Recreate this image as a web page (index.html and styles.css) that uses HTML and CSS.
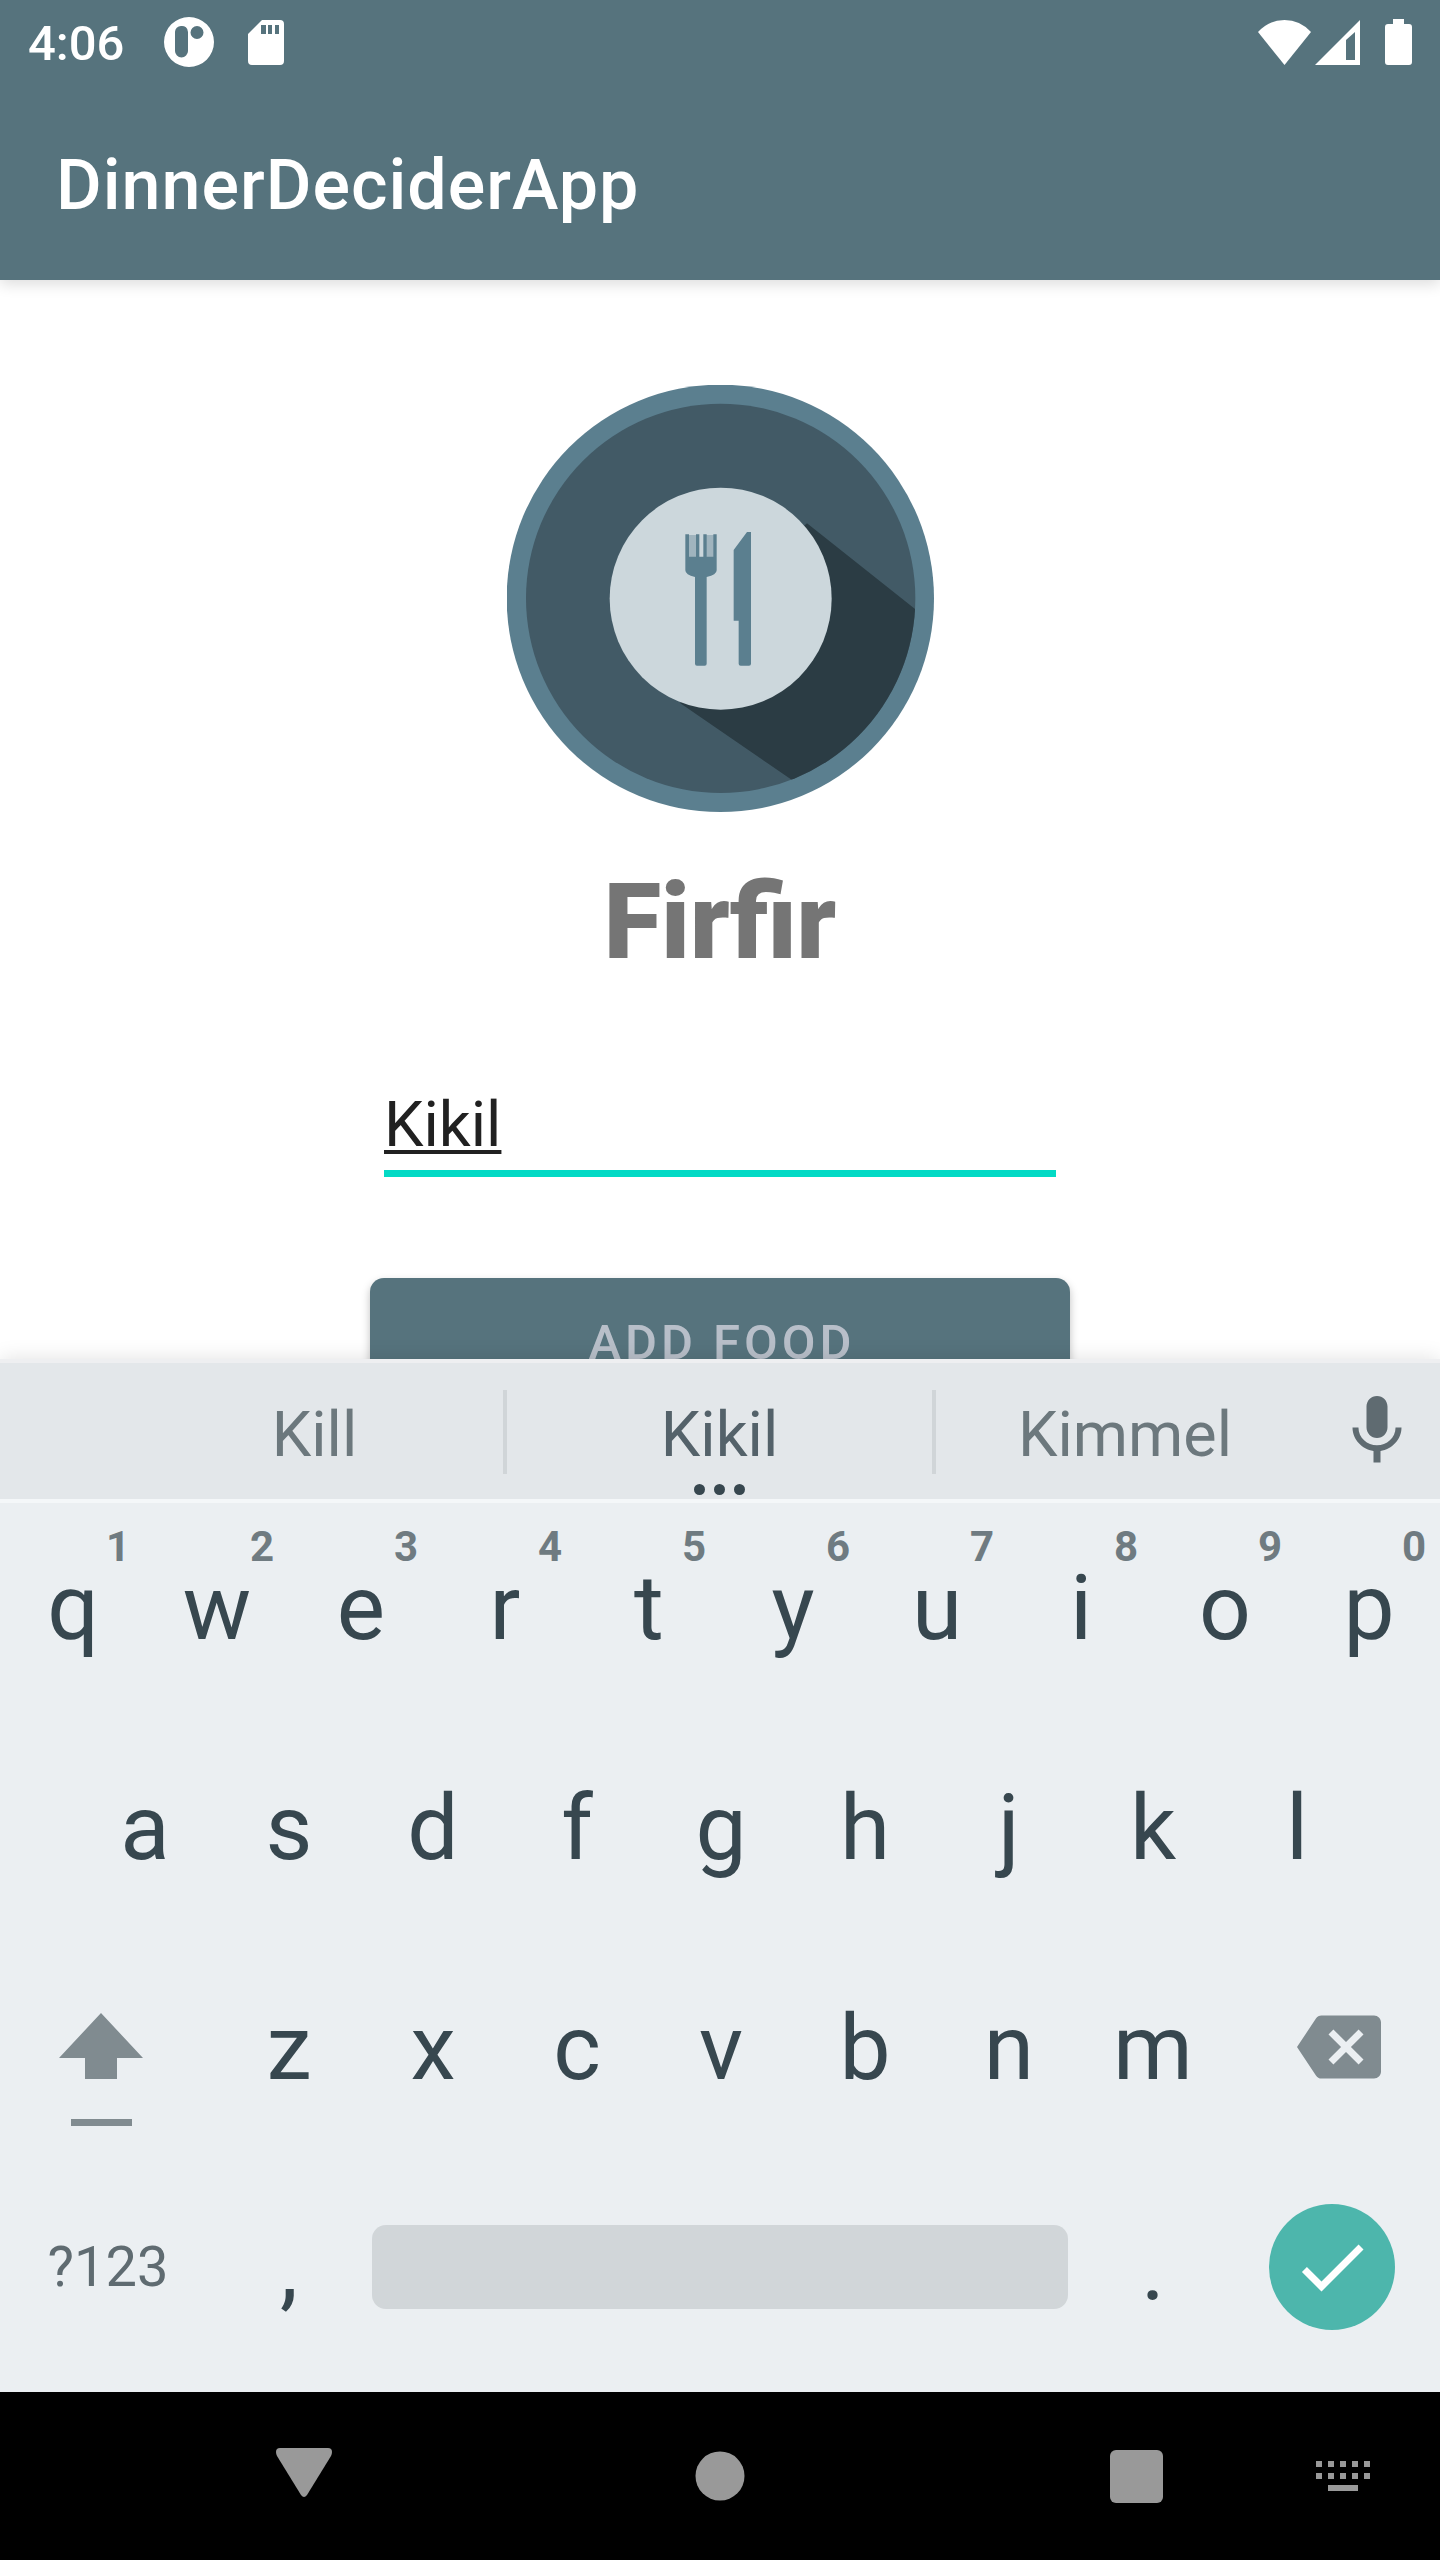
FILE: index.html
```html
<!DOCTYPE html>
<html lang="en">
<head>
<meta charset="utf-8">
<meta name="viewport" content="width=device-width, initial-scale=1">
<title>DinnerDeciderApp</title>
<link rel="stylesheet" href="styles.css">
</head>
<body>
<div class="screen">
  <header class="header">
    <div class="status">
      <time class="clock">4:06</time>
      <div class="status-left">
        <svg width="50" height="50" viewBox="0 0 50 50" aria-hidden="true"><path fill="#fff" fill-rule="evenodd" d="M25 0a25 25 0 1 1 0 50a25 25 0 1 1 0-50zM17 9a6 6 0 0 0-6 6v19a6 6 0 0 0 13 0V15a6 6 0 0 0-7-6zM33 9a6.500 6.500 0 1 0 0 13a6.500 6.500 0 1 0 0-13z"/></svg>
        <svg width="36" height="45" viewBox="0 0 36 45" aria-hidden="true"><path fill="#fff" fill-rule="evenodd" d="M14 0h18a4 4 0 0 1 4 4v37a4 4 0 0 1-4 4H4a4 4 0 0 1-4-4V14zM13 5v9h5V5zM20 5v9h4V5zM27 5v9h4V5z"/></svg>
      </div>
      <div class="status-right">
        <svg width="53" height="45" viewBox="0 0 53 45" aria-hidden="true"><path fill="#fff" d="M26.500 45L0 12Q11 0 26.500 0T53 12z"/></svg>
        <svg width="45" height="45" viewBox="0 0 45 45" aria-hidden="true"><path fill="#fff" fill-rule="evenodd" d="M45 0v45H0zM40 12l-9 8v20h9z"/></svg>
        <svg class="battery" width="27" height="46" viewBox="0 0 27 46" aria-hidden="true"><path fill="#fff" d="M8 0h11v5h5a3 3 0 0 1 3 3v35a3 3 0 0 1-3 3H3a3 3 0 0 1-3-3V8a3 3 0 0 1 3-3h5z"/></svg>
      </div>
    </div>
    <h1 class="title">DinnerDeciderApp</h1>
  </header>

  <main class="content">
    <svg class="logo" viewBox="50 45 1281 1281" role="img" aria-label="Plate with fork and knife">
      <defs><clipPath id="plate"><circle cx="691" cy="685" r="584"/></clipPath></defs>
      <circle cx="690" cy="685" r="641" fill="#5b7f8f"/>
      <circle cx="691" cy="685" r="584" fill="#425a66"/>
      <path clip-path="url(#plate)" fill="#2b3c44" d="M950 460L1275 718L1400 1300L1010 1305L905 1230L570 1000L690 685z"/>
      <circle cx="691" cy="686" r="333" fill="#ccd7dc"/>
      <path fill="#a0b4be" d="M590 495h30v70h-30zM643 495h30v70h-30z"/>
      <path fill="#5b7f8f" d="M585 493h11v67h21v-67h10v67h12v-67h10v67h20v-67h10v108q0 14-30 20v260q0 6-6 6h-23q-6 0-6-6V621q-29-6-29-20zM770 486h12v395q0 6-6 6h-25q-6 0-6-6V752h-15V540z"/>
    </svg>
    <h2 class="food">Firfir</h2>
    <form class="form">
      <input class="field" type="text" value="Kikil" aria-label="Food name">
      <button class="add" type="button">ADD FOOD</button>
    </form>
  </main>

  <section class="keyboard" aria-label="Keyboard">
    <div class="suggestions">
      <button class="word" type="button">Kill</button>
      <button class="word current" type="button">Kikil<span class="dots"><i></i><i></i><i></i></span></button>
      <button class="word" type="button">Kimmel</button>
      <button class="mic" type="button" aria-label="Voice input"><svg width="84" height="84" viewBox="0 0 24 24"><path fill="#5f6b71" d="M12 14c1.660 0 3-1.340 3-3V5c0-1.660-1.340-3-3-3S9 3.340 9 5v6c0 1.660 1.340 3 3 3zM17.300 11c0 3-2.540 5.100-5.300 5.100S6.700 14 6.700 11H5c0 3.410 2.720 6.230 6 6.720V21h2v-3.280c3.280-.48 6-3.300 6-6.720z"/></svg></button>
    </div>
    <div class="keys">
      <div class="row">
        <button class="key" type="button">q<span class="hint">1</span></button>
        <button class="key" type="button">w<span class="hint">2</span></button>
        <button class="key" type="button">e<span class="hint">3</span></button>
        <button class="key" type="button">r<span class="hint">4</span></button>
        <button class="key" type="button">t<span class="hint">5</span></button>
        <button class="key" type="button">y<span class="hint">6</span></button>
        <button class="key" type="button">u<span class="hint">7</span></button>
        <button class="key" type="button">i<span class="hint">8</span></button>
        <button class="key" type="button">o<span class="hint">9</span></button>
        <button class="key" type="button">p<span class="hint">0</span></button>
      </div>
      <div class="row inset">
        <button class="key" type="button">a</button>
        <button class="key" type="button">s</button>
        <button class="key" type="button">d</button>
        <button class="key" type="button">f</button>
        <button class="key" type="button">g</button>
        <button class="key" type="button">h</button>
        <button class="key" type="button">j</button>
        <button class="key" type="button">k</button>
        <button class="key" type="button">l</button>
      </div>
      <div class="row">
        <button class="key side shift" type="button" aria-label="Shift"><svg width="84" height="160" viewBox="0 0 84 160"><path fill="#808b90" d="M42 46l42 45H58v21H26V91H0zM12 152h61v7H12z"/></svg></button>
        <button class="key" type="button">z</button>
        <button class="key" type="button">x</button>
        <button class="key" type="button">c</button>
        <button class="key" type="button">v</button>
        <button class="key" type="button">b</button>
        <button class="key" type="button">n</button>
        <button class="key" type="button">m</button>
        <button class="key side delete" type="button" aria-label="Delete"><svg width="84" height="84" viewBox="0 0 24 24"><path fill="#808b90" d="M22 3H7c-.69 0-1.230.35-1.590.88L0 12l5.410 8.110c.36.53.9.89 1.590.89h15c1.100 0 2-.9 2-2V5c0-1.100-.9-2-2-2zm-3 12.590L17.590 17 14 13.410 10.410 17 9 15.590 12.590 12 9 8.410 10.410 7 14 10.590 17.590 7 19 8.410 15.410 12 19 15.590z"/></svg></button>
      </div>
      <div class="row">
        <button class="key side symbols" type="button">?123</button>
        <button class="key" type="button">,</button>
        <button class="key space" type="button" aria-label="Space"><span class="bar"></span></button>
        <button class="key" type="button">.</button>
        <button class="key side" type="button" aria-label="Done"><span class="done"><svg width="84" height="84" viewBox="0 0 24 24"><path fill="#fff" d="M9 16.170L4.830 12l-1.420 1.410L9 19 21 7l-1.410-1.410z"/></svg></span></button>
      </div>
    </div>
  </section>

  <nav class="nav" aria-label="System">
    <button class="nav-key back" type="button" aria-label="Back"><svg width="56" height="56" viewBox="0 0 56 56"><path fill="#999" d="M4 0h48q4 0 4 4 0 2-1 4L31 47q-3 4-6 0L1 8Q0 6 0 4 0 0 4 0z"/></svg></button>
    <button class="nav-key home" type="button" aria-label="Home"><svg width="50" height="50" viewBox="0 0 50 50"><circle cx="25" cy="25" r="24.500" fill="#999"/></svg></button>
    <button class="nav-key recent" type="button" aria-label="Recent apps"><svg width="53" height="53" viewBox="0 0 53 53"><rect width="53" height="53" rx="6" fill="#999"/></svg></button>
    <button class="nav-key switcher" type="button" aria-label="Switch keyboard"><svg width="54" height="30" viewBox="0 0 54 30"><path fill="#999" d="M0 0h6v6H0zM12 0h6v6h-6zM24 0h6v6h-6zM36 0h6v6h-6zM48 0h6v6h-6zM0 12h6v6H0zM12 12h6v6h-6zM24 12h6v6h-6zM36 12h6v6h-6zM48 12h6v6h-6zM12 24h30v6H12z"/></svg></button>
  </nav>
</div>
</body>
</html>
```
FILE: styles.css
```css
* { box-sizing: border-box; }

body {
  margin: 0;
  font-family: Roboto, "Liberation Sans", sans-serif;
  background: #fff;
}

button {
  margin: 0;
  padding: 0;
  border: 0;
  background: none;
  color: inherit;
  font: inherit;
}

svg { display: block; flex: none; }

.screen {
  display: flex;
  flex-direction: column;
  height: 100vh;
}

/* Status bar and app bar */
.header {
  position: relative;
  flex: none;
  background: #56737d;
  color: #fff;
  box-shadow: 0 4px 14px rgba(0, 0, 0, 0.14);
}

.status {
  display: flex;
  align-items: center;
  height: 84px;
  padding: 0 28px;
}

.clock {
  padding-top: 2px;
  font-size: 49px;
  font-weight: 500;
}

.status-left {
  display: flex;
  align-items: center;
  gap: 34px;
  margin-left: 40px;
}

.status-right {
  display: flex;
  align-items: center;
  gap: 4px;
  margin-left: auto;
}

.battery { margin-left: 21px; }

.title {
  margin: 0;
  padding: 6px 56px 0;
  font-size: 70px;
  font-weight: 500;
  letter-spacing: 1px;
  line-height: 190px;
}

/* App content, cut off by the keyboard */
.content {
  display: flex;
  flex: 1 1 0;
  flex-direction: column;
  align-items: center;
  min-height: 0;
  padding-top: 105px;
  overflow: hidden;
}

.logo { width: 427px; height: 427px; }

.food {
  margin: 49px 0 0;
  color: #757575;
  font-size: 105px;
  font-weight: 900;
  line-height: 124px;
}

.form {
  display: flex;
  flex: none;
  flex-direction: column;
  gap: 101px;
  width: 700px;
  max-width: 100%;
  margin-top: 101px;
}

.field {
  margin: 0 14px;
  padding: 2px 0 8px;
  border: 0;
  border-bottom: 7px solid #03dac5;
  border-radius: 0;
  outline: 0;
  background: none;
  color: #212121;
  font: 63px/74px Roboto, "Liberation Sans", sans-serif;
  text-decoration: underline;
  text-decoration-thickness: 4px;
  text-underline-offset: 4px;
}

.add {
  height: 126px;
  padding: 2px 0 0 4px;
  border-radius: 14px;
  background: #56737d;
  box-shadow: 0 4px 8px rgba(0, 0, 0, 0.25);
  color: #b8bfc9;
  font-size: 49px;
  font-weight: 500;
  letter-spacing: 4px;
}

/* Keyboard */
.keyboard {
  position: relative;
  flex: none;
  background: #ebeff2;
  box-shadow: 0 0 20px rgba(0, 0, 0, 0.12);
}

.suggestions {
  display: grid;
  grid-template-columns: 377fr 433fr 378fr 126fr;
  height: 144px;
  padding-left: 126px;
  border-top: 4px solid #eeeff1;
  border-bottom: 4px solid #f4f7f9;
  background: #e3e7ea;
}

.word {
  position: relative;
  padding-top: 6px;
  color: #6c787d;
  font-size: 63px;
}

.current { color: #54626a; }

.current::before,
.current::after {
  position: absolute;
  top: 27px;
  left: 0;
  width: 4px;
  height: 84px;
  background: #d0d5d8;
  content: "";
}

.current::after { right: 0; left: auto; }

.dots {
  position: absolute;
  right: 0;
  bottom: 4px;
  left: 0;
  display: flex;
  justify-content: center;
  gap: 9px;
}

.dots i {
  width: 11px;
  height: 11px;
  border-radius: 50%;
  background: #37474f;
}

.mic {
  display: flex;
  align-items: center;
  justify-content: center;
}

.keys {
  display: flex;
  flex-direction: column;
  gap: 12px;
  padding-bottom: 21px;
}

.row {
  display: grid;
  grid-template-columns: repeat(20, 1fr);
  height: 208px;
}

.inset .key:first-child { grid-column: 2 / span 2; }

.key {
  position: relative;
  display: flex;
  grid-column: span 2;
  align-items: center;
  justify-content: center;
  padding: 2px 0 0 2px;
  color: #37474f;
  font-size: 91px;
}

.hint {
  position: absolute;
  top: 19px;
  right: 14px;
  color: #6f7b81;
  font-size: 42px;
  font-weight: 700;
  line-height: 50px;
}

.side {
  grid-column: span 3;
  padding: 0;
}

.shift { padding-right: 14px; }

.delete { padding-left: 14px; }

.symbols {
  color: #5f6b71;
  font-size: 56px;
}

.space {
  grid-column: span 10;
  padding: 0 12px;
}

.bar {
  flex: 1;
  height: 84px;
  border-radius: 14px;
  background: #d1d6d9;
}

.done {
  display: flex;
  align-items: center;
  justify-content: center;
  width: 126px;
  height: 126px;
  border-radius: 50%;
  background: #4db6ac;
}

/* System navigation */
.nav {
  display: grid;
  flex: none;
  grid-template-columns: 200fr repeat(5, 208fr) 200fr;
  height: 168px;
  background: #000;
}

.nav-key {
  display: flex;
  align-items: center;
  justify-content: center;
}

.back { grid-column: 2; }
.home { grid-column: 4; }
.recent { grid-column: 6; }
.switcher { grid-column: 7; padding-left: 6px; }
```
